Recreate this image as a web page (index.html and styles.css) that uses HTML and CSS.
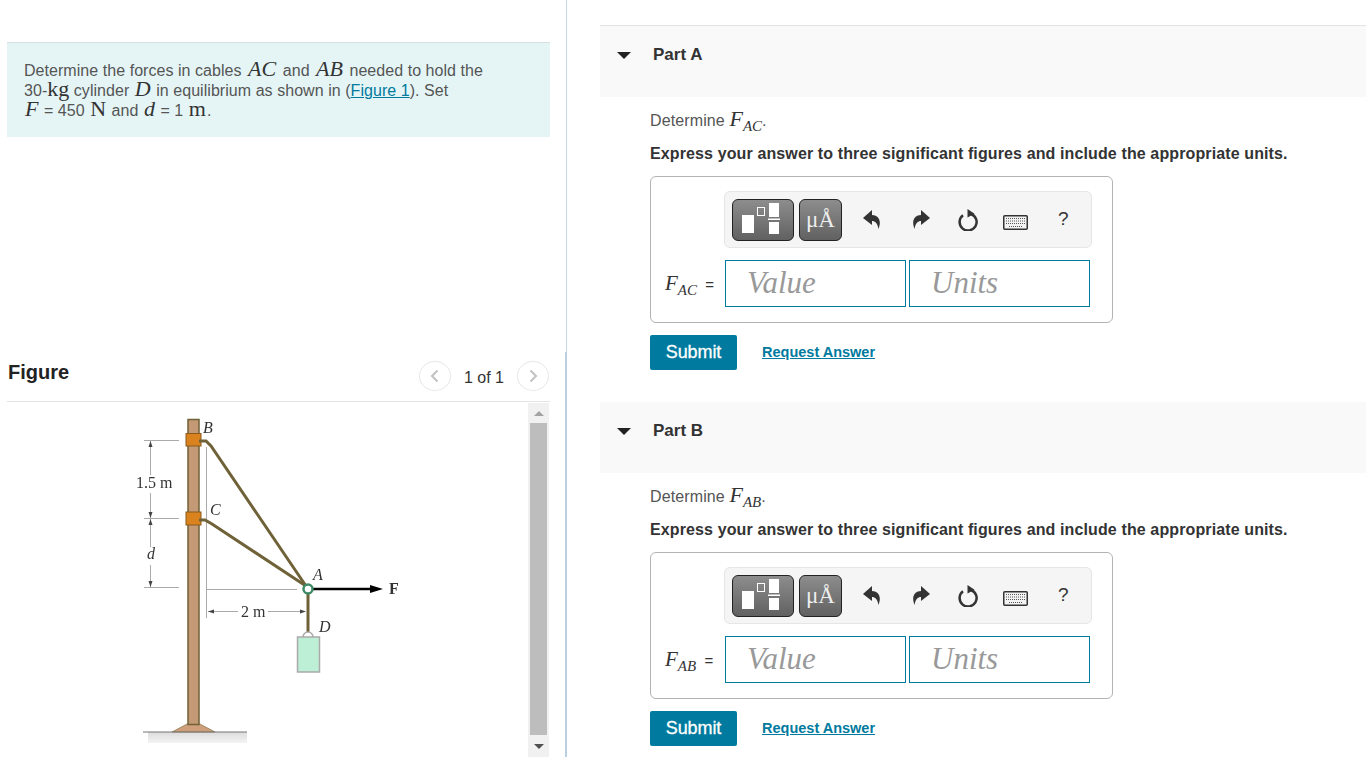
FILE: index.html
```html
<!DOCTYPE html>
<html lang="en">
<head>
    <meta charset="UTF-8">
    <title>Part A and Part B</title>
    <link rel="stylesheet" href="styles.css">
</head>
<body>
    <svg class="sprites" width="0" height="0">
        <symbol id="icon-undo" viewBox="0 0 18 19">
            <path d="M9 0 L0 8 L9 15 V11 C12 11 14.500 13 15.500 19 C19 10 15 5 9 5 Z"/>
        </symbol>
        <symbol id="icon-redo" viewBox="0 0 18 19">
            <path d="M9 0 L18 8 L9 15 V11 C6 11 3.500 13 2.500 19 C-1 10 3 5 9 5 Z"/>
        </symbol>
        <symbol id="icon-reset" viewBox="0 0 20 22">
            <path class="ring" d="M13 5 A8.500 8.500 0 1 1 5 6.200"/>
            <path d="M9.500 0 L16.500 4.800 L9.500 8.500 Z"/>
        </symbol>
        <symbol id="icon-keyboard" viewBox="0 0 25 15">
            <rect class="kb-frame" x="0.750" y="0.750" width="23.500" height="13.500" rx="1"/>
            <path class="kb-keys" d="M3 3.500 H22 M3 6 H22 M3 8.500 H22 M6 11.500 H19"/>
        </symbol>
    </svg>

    <div class="page">
        <div class="left-col">
            <div class="top-pane">
                <div class="intro">
                    Determine the forces in cables <i class="m big wide">AC</i> and <i class="m big wide">AB</i> needed to hold the<br>
                    30-<span class="m big">kg</span> cylinder <i class="m big near">D</i> in equilibrium as shown in (<a href="#">Figure 1</a>). Set<br>
                    <i class="m big near">F</i> = 450 <span class="m big near">N</span> and <i class="m big near">d</i> = 1 <span class="m big near">m</span>.
                </div>
            </div>

            <div class="figure-pane">
                <div class="figure-head">
                    <h2>Figure</h2>
                    <div class="pager">
                        <button class="pager-btn"><svg width="9" height="14" viewBox="0 0 9 14"><path d="M7.500 1.500 L2 7 L7.500 12.500"/></svg></button>
                        <span>1 of 1</span>
                        <button class="pager-btn"><svg width="9" height="14" viewBox="0 0 9 14"><path d="M1.500 1.500 L7 7 L1.500 12.500"/></svg></button>
                    </div>
                </div>

                <div class="figure-body">
                    <svg class="diagram" width="300" height="347" viewBox="0 0 300 347">
                        <defs>
                            <linearGradient id="ground-shade" x1="0" y1="0" x2="0" y2="1">
                                <stop offset="0" stop-color="#dcdcdc"/>
                                <stop offset="1" stop-color="#f4f4f4"/>
                            </linearGradient>
                        </defs>
                        <!-- ground -->
                        <rect x="28" y="322" width="99" height="11" fill="url(#ground-shade)"/>
                        <path d="M52 322 L67 314 H80 L95 322 Z" fill="#cf9f7c" stroke="#8a7a50" stroke-width="0.750"/>
                        <path d="M23 322 H127" stroke="#777" stroke-width="1.200"/>
                        <!-- post -->
                        <rect x="68" y="9.500" width="11" height="305" fill="#c49a76" stroke="#6f6238" stroke-width="1.500"/>
                        <!-- dimension lines -->
                        <g stroke="#aaa" stroke-width="1" fill="none">
                            <path d="M24 30.500 H59 M24 108.500 H59 M24 177.500 H59"/>
                            <path d="M30.500 31 V65 M30.500 83 V137 M30.500 155 V177"/>
                            <path d="M86.500 37 V208"/>
                            <path d="M87 179.500 H177"/>
                            <path d="M88 201.500 H118 M148 201.500 H180"/>
                        </g>
                        <g fill="#444">
                            <path d="M30.500 31 L28.500 37 H32.500 Z M30.500 108 L28.500 102 H32.500 Z M30.500 109 L28.500 115 H32.500 Z M30.500 177 L28.500 171 H32.500 Z"/>
                            <path d="M88 201.500 L94 199.500 V203.500 Z M186 201.500 L180 199.500 V203.500 Z"/>
                        </g>
                        <!-- collars -->
                        <rect x="66" y="23.500" width="15" height="12.500" fill="#d9821e" stroke="#8a5a1c"/>
                        <rect x="66" y="102" width="15" height="13" fill="#d9821e" stroke="#8a5a1c"/>
                        <!-- cables -->
                        <g stroke="#6f6238" stroke-width="3" fill="none">
                            <path d="M79 31 H86 L91 36 L186 176"/>
                            <path d="M79 110 H85 L92 114 L186 176"/>
                            <path d="M188 183 V222"/>
                        </g>
                        <path d="M192 179 H252" stroke="#000" stroke-width="2.500"/>
                        <path d="M263 179 L250 175 V183 Z" fill="#000"/>
                        <circle cx="188" cy="179" r="4.500" fill="#fff" stroke="#3f8a66" stroke-width="2.500"/>
                        <!-- cylinder -->
                        <path d="M183 227 A5 5 0 0 1 193 227" fill="none" stroke="#aaa" stroke-width="1.500"/>
                        <rect x="177.500" y="227" width="22" height="35" fill="#bdeed6" stroke="#aaa" stroke-width="1.500"/>
                        <!-- labels -->
                        <g class="fig-label">
                            <text x="83" y="23" font-style="italic">B</text>
                            <text x="90" y="105" font-style="italic">C</text>
                            <text x="193" y="170" font-style="italic">A</text>
                            <text x="199" y="222" font-style="italic">D</text>
                            <text x="27" y="149" font-style="italic">d</text>
                            <text x="16" y="78">1.5 m</text>
                            <text x="121" y="207">2 m</text>
                            <text x="269" y="184" font-weight="bold">F</text>
                        </g>
                    </svg>
                    <div class="scrollbar">
                        <div class="scroll-arrow"><span class="tri-up"></span></div>
                        <div class="scroll-thumb"></div>
                        <div class="scroll-arrow scroll-arrow-end"><span class="tri-down"></span></div>
                    </div>
                </div>
            </div>
        </div>

        <div class="right-col">
            <section class="part">
                <div class="part-head"><span class="caret"></span><h3>Part A</h3></div>
                <div class="part-body">
                    <p class="ask">Determine <i class="m big">F<sub>AC</sub></i>.</p>
                    <p class="express">Express your answer to three significant figures and include the appropriate units.</p>
                    <div class="answer-box">
                        <div class="toolbar">
                            <button class="tpl tpl-frac">
                                <svg width="60" height="40" viewBox="0 0 60 40">
                                    <rect x="9" y="15" width="12" height="18" fill="#fff"/>
                                    <rect x="24.500" y="7.500" width="7" height="8" fill="none" stroke="#fff"/>
                                    <rect x="36" y="3" width="10" height="14" fill="#fff"/>
                                    <rect x="35" y="18.500" width="12" height="1.500" fill="#fff"/>
                                    <rect x="36" y="22" width="10" height="12" fill="#fff"/>
                                </svg>
                            </button>
                            <button class="tpl tpl-unit">μÅ</button>
                            <svg class="tool tool-undo"><use href="#icon-undo"/></svg>
                            <svg class="tool tool-redo"><use href="#icon-redo"/></svg>
                            <svg class="tool tool-reset"><use href="#icon-reset"/></svg>
                            <svg class="tool tool-kb"><use href="#icon-keyboard"/></svg>
                            <span class="tool-help">?</span>
                        </div>
                        <div class="input-row">
                            <label class="m"><i>F<sub>AC</sub></i> <span>=</span></label>
                            <div class="field">Value</div>
                            <div class="field">Units</div>
                        </div>
                    </div>
                    <div class="actions">
                        <button class="submit">Submit</button>
                        <a class="request" href="#">Request Answer</a>
                    </div>
                </div>
            </section>

            <section class="part">
                <div class="part-head"><span class="caret"></span><h3>Part B</h3></div>
                <div class="part-body">
                    <p class="ask">Determine <i class="m big">F<sub>AB</sub></i>.</p>
                    <p class="express">Express your answer to three significant figures and include the appropriate units.</p>
                    <div class="answer-box">
                        <div class="toolbar">
                            <button class="tpl tpl-frac">
                                <svg width="60" height="40" viewBox="0 0 60 40">
                                    <rect x="9" y="15" width="12" height="18" fill="#fff"/>
                                    <rect x="24.500" y="7.500" width="7" height="8" fill="none" stroke="#fff"/>
                                    <rect x="36" y="3" width="10" height="14" fill="#fff"/>
                                    <rect x="35" y="18.500" width="12" height="1.500" fill="#fff"/>
                                    <rect x="36" y="22" width="10" height="12" fill="#fff"/>
                                </svg>
                            </button>
                            <button class="tpl tpl-unit">μÅ</button>
                            <svg class="tool tool-undo"><use href="#icon-undo"/></svg>
                            <svg class="tool tool-redo"><use href="#icon-redo"/></svg>
                            <svg class="tool tool-reset"><use href="#icon-reset"/></svg>
                            <svg class="tool tool-kb"><use href="#icon-keyboard"/></svg>
                            <span class="tool-help">?</span>
                        </div>
                        <div class="input-row">
                            <label class="m"><i>F<sub>AB</sub></i> <span>=</span></label>
                            <div class="field">Value</div>
                            <div class="field">Units</div>
                        </div>
                    </div>
                    <div class="actions">
                        <button class="submit">Submit</button>
                        <a class="request" href="#">Request Answer</a>
                    </div>
                </div>
            </section>
        </div>
    </div>
</body>
</html>
```

FILE: styles.css
```css
html, body {
    margin: 0;
    padding: 0;
    height: 757px;
    overflow: hidden;
    background-color: #fff;
}
body {
    font-family: "Liberation Sans", Arial, sans-serif;
    font-size: 16px;
    letter-spacing: 0.12px;
    color: #333;
}
.sprites {
    display: block;
    height: 0;
}
.page {
    display: flex;
    height: 757px;
    overflow: hidden;
}
.m {
    font-family: "Liberation Serif", "Times New Roman", serif;
    color: #333;
    letter-spacing: 0;
}
.big {
    font-size: 22px;
    line-height: 16px;
}
.near {
    margin: 0 1px;
}
.wide {
    margin: 0 2px;
}
a {
    color: #007a9e;
}

/* left column */
.left-col {
    width: 567px;
    flex: none;
}
.top-pane {
    height: 352px;
    box-sizing: border-box;
    padding: 42px 16px 0 7px;
    border-right: 1px solid #c5d8e8;
}
.figure-pane {
    height: 405px;
    box-sizing: border-box;
    padding: 0 15px 0 7px;
    border-right: 2px solid #b9cfe2;
}
.intro {
    height: 95px;
    box-sizing: border-box;
    padding: 18px 16px 0 17px;
    background-color: #e5f5f6;
    border-top: 1px solid #d6e0e1;
    line-height: 20px;
    letter-spacing: 0.05px;
    color: #555;
}
.figure-head {
    display: flex;
    justify-content: space-between;
    align-items: center;
    height: 50px;
    box-sizing: border-box;
    border-bottom: 1px solid #e3e3e3;
}
.figure-head h2 {
    margin: 0 0 8px 1px;
    font-size: 20px;
    font-weight: bold;
    letter-spacing: 0;
    color: #222;
}
.pager {
    display: flex;
    align-items: center;
    gap: 13px;
    margin: 0 1px 1px 0;
    letter-spacing: 0;
}
.pager span {
    margin-top: 4px;
}
.pager-btn {
    width: 32px;
    height: 30px;
    padding: 0;
    display: flex;
    align-items: center;
    justify-content: center;
    background: #fff;
    border: 1px solid #e8e8e8;
    border-radius: 50%;
}
.pager-btn path {
    fill: none;
    stroke: #c2c2c2;
    stroke-width: 2;
}
.figure-body {
    display: flex;
    justify-content: space-between;
    height: 355px;
    padding-right: 1px;
}
.diagram {
    display: block;
    margin: 8px 0 0 113px;
    font-family: "Liberation Serif", serif;
    letter-spacing: 0;
    filter: blur(0.5px);
}
.fig-label text {
    font-size: 16px;
    fill: #333;
}
.scrollbar {
    width: 21px;
    margin-top: 1px;
    display: flex;
    flex-direction: column;
    background-color: #f1f1f1;
}
.scroll-arrow {
    height: 20px;
    flex: none;
    display: flex;
    align-items: center;
    justify-content: center;
}
.scroll-arrow-end {
    height: 22px;
}
.scroll-thumb {
    flex: 1;
    background-color: #bdbdbd;
    margin: 0 2px;
}
.tri-up {
    border-left: 5px solid transparent;
    border-right: 5px solid transparent;
    border-bottom: 5px solid #a3a3a3;
}
.tri-down {
    border-left: 5px solid transparent;
    border-right: 5px solid transparent;
    border-top: 5px solid #505050;
}

/* right column */
.right-col {
    flex: 1;
    padding: 25px 0 0 33px;
}
.part + .part {
    margin-top: 31px;
}
.part-head {
    display: flex;
    align-items: flex-start;
    height: 72px;
    box-sizing: border-box;
    padding-top: 19px;
    background-color: #f9f9f9;
    background-clip: padding-box;
    border-top: 1px solid #e3e3e3;
}
.part + .part .part-head {
    border-top-color: #fff;
}
.caret {
    margin: 7px 0 0 17px;
    border-left: 7px solid transparent;
    border-right: 7px solid transparent;
    border-top: 7px solid #222;
}
.part-head h3 {
    margin: 0 0 0 22px;
    font-size: 17px;
    line-height: 20px;
    font-weight: bold;
    letter-spacing: 0;
    color: #333;
}
.part-body {
    padding: 14px 0 0 50px;
}
.ask {
    margin: 0;
    height: 22px;
    line-height: 20px;
    color: #555;
}
.ask sub, .input-row sub {
    font-size: 15px;
    font-weight: normal;
    line-height: 0;
}
.express {
    margin: 11px 0 0;
    line-height: 20px;
    font-weight: bold;
    color: #333;
}
.answer-box {
    width: 463px;
    height: 147px;
    box-sizing: border-box;
    margin-top: 12px;
    padding: 14px 0 0 14px;
    border: 1px solid #b3b3b3;
    border-radius: 6px;
}
.toolbar {
    display: flex;
    align-items: center;
    width: 368px;
    height: 57px;
    box-sizing: border-box;
    margin-left: 59px;
    padding-left: 7px;
    background-color: #f5f5f5;
    border: 1px solid #e6e6e6;
    border-radius: 6px;
}
.tpl {
    height: 42px;
    padding: 0;
    display: flex;
    flex: none;
    align-items: center;
    justify-content: center;
    color: #eee;
    background: linear-gradient(#8d8d8d, #616161);
    border: 1px solid #222;
    border-radius: 6px;
}
.tpl-frac {
    width: 62px;
    margin-right: 5px;
}
.tpl-unit {
    width: 43px;
    font-family: "Liberation Serif", serif;
    font-size: 23px;
}
.tool {
    fill: #333;
    flex: none;
}
.tool-undo, .tool-redo {
    width: 18px;
    height: 19px;
}
.tool-undo {
    margin-left: 21px;
}
.tool-redo {
    margin-left: 31px;
}
.tool-reset {
    width: 20px;
    height: 22px;
    margin-left: 28px;
}
.ring {
    fill: none;
    stroke: #333;
    stroke-width: 2.500;
}
.tool-kb {
    width: 25px;
    height: 15px;
    margin: 5px 0 0 25px;
}
.kb-frame {
    fill: #f3f3f3;
    stroke: #333;
    stroke-width: 1.500;
}
.kb-keys {
    fill: none;
    stroke: #555;
    stroke-dasharray: 1 1;
}
.tool-help {
    margin: 0 0 2px 30px;
    font-size: 19px;
    color: #333;
}
.input-row {
    display: flex;
    align-items: center;
    margin-top: 12px;
}
.input-row label {
    width: 60px;
    flex: none;
    font-size: 21px;
    white-space: nowrap;
}
.input-row label span {
    margin-left: 3px;
    font-family: "Liberation Sans", Arial, sans-serif;
    font-size: 15px;
}
.field {
    width: 181px;
    height: 47px;
    flex: none;
    box-sizing: border-box;
    margin-right: 3px;
    padding-left: 21px;
    border: 1px solid #007a9e;
    font-family: "Liberation Serif", serif;
    font-style: italic;
    font-size: 31px;
    letter-spacing: 0;
    line-height: 44px;
    color: #999;
}
.actions {
    display: flex;
    align-items: center;
    margin-top: 12px;
}
.submit {
    width: 87px;
    height: 35px;
    padding: 0;
    background-color: #007a9e;
    color: #fff;
    border: 0;
    border-radius: 2px;
    font-family: inherit;
    font-size: 18px;
    letter-spacing: -0.1px;
    -webkit-text-stroke: 0.3px #fff;
}
.request {
    margin: 0 0 2px 25px;
    font-size: 14.5px;
    font-weight: bold;
    letter-spacing: 0;
}
```
